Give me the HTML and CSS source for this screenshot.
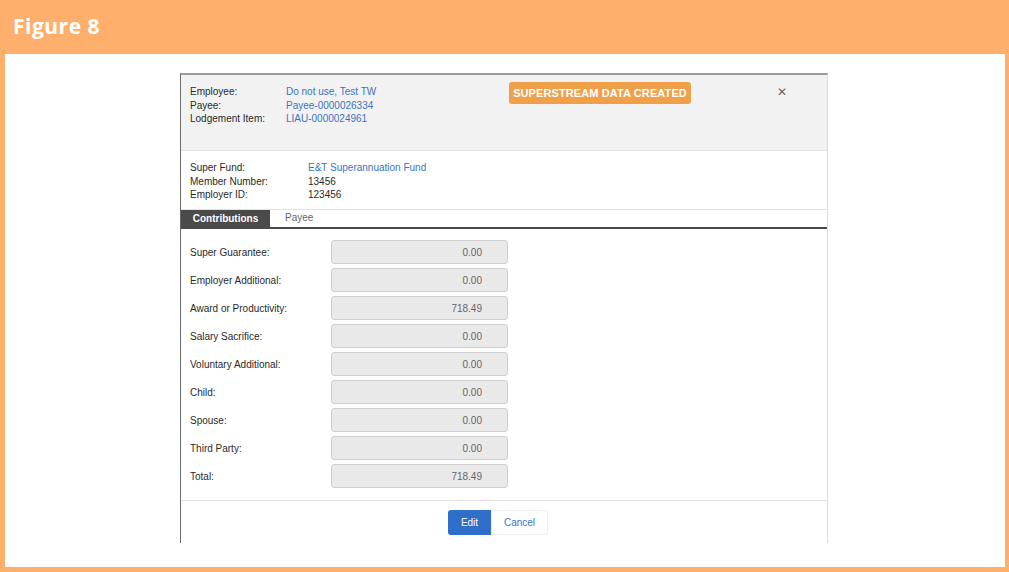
FILE: index.html
```html
<!DOCTYPE html>
<html lang="en">
<head>
<meta charset="UTF-8">
<title>Figure 8</title>
<link rel="stylesheet" href="styles.css">
</head>
<body>
<div class="frame">
<div class="title">Figure 8</div>
<div class="sheet">
<div class="dialog">
<div class="head">
<div class="info">
<div class="pair"><span class="lbl">Employee:</span><a class="val link">Do not use, Test TW</a></div>
<div class="pair"><span class="lbl">Payee:</span><a class="val link">Payee-0000026334</a></div>
<div class="pair"><span class="lbl">Lodgement Item:</span><a class="val link">LIAU-0000024961</a></div>
</div>
<div class="badge">SUPERSTREAM DATA CREATED</div>
<div class="close">&#x2715;</div>
</div>
<div class="fund">
<div class="pair"><span class="lbl">Super Fund:</span><a class="val link">E&amp;T Superannuation Fund</a></div>
<div class="pair"><span class="lbl">Member Number:</span><span class="val">13456</span></div>
<div class="pair"><span class="lbl">Employer ID:</span><span class="val">123456</span></div>
</div>
<div class="tabs">
<div class="tab active">Contributions</div>
<div class="tab">Payee</div>
</div>
<div class="form">
<div class="row"><label>Super Guarantee:</label><input type="text" value="0.00" readonly></div>
<div class="row"><label>Employer Additional:</label><input type="text" value="0.00" readonly></div>
<div class="row"><label>Award or Productivity:</label><input type="text" value="718.49" readonly></div>
<div class="row"><label>Salary Sacrifice:</label><input type="text" value="0.00" readonly></div>
<div class="row"><label>Voluntary Additional:</label><input type="text" value="0.00" readonly></div>
<div class="row"><label>Child:</label><input type="text" value="0.00" readonly></div>
<div class="row"><label>Spouse:</label><input type="text" value="0.00" readonly></div>
<div class="row"><label>Third Party:</label><input type="text" value="0.00" readonly></div>
<div class="row"><label>Total:</label><input type="text" value="718.49" readonly></div>
</div>
<div class="actions">
<button class="btn primary">Edit</button>
<button class="btn plain">Cancel</button>
</div>
</div>
</div>
</div>
</body>
</html>
```

FILE: styles.css
```css
body {
margin: 0;
font-family: "Liberation Sans", Arial, sans-serif;
}
.frame {
width: 1009px;
height: 572px;
box-sizing: border-box;
background-color: #fdaf6b;
padding: 0 4px 5px 5px;
display: flex;
flex-direction: column;
}
.title {
height: 54px;
box-sizing: border-box;
padding: 12px 0 0 8px;
color: white;
font-family: "Open Sans", sans-serif;
font-weight: 700;
font-size: 21px;
letter-spacing: 0.5px;
}
.sheet {
flex: 1;
background-color: white;
padding: 19px 0 0 175px;
}
.dialog {
width: 648px;
height: 470px;
box-sizing: border-box;
border-top: 2px solid #9a9a9a;
border-left: 1px solid #6a6a6a;
border-right: 1px solid #dcdcdc;
display: flex;
flex-direction: column;
font-size: 10px;
color: #2a2a2a;
}
.head {
background-color: #f2f2f2;
height: 76px;
box-sizing: border-box;
padding: 7px 0 0 9px;
display: flex;
align-items: flex-start;
border-bottom: 1px solid #e2e2e2;
}
.info {
width: 319px;
padding-top: 3px;
}
.pair {
display: flex;
line-height: 13.5px;
}
.head .lbl {
width: 96px;
}
.link {
color: #3b73c4;
}
.badge {
background-color: #f0a048;
color: white;
font-weight: 700;
font-size: 11px;
width: 182px;
text-align: center;
padding-top: 5px;
height: 22px;
box-sizing: border-box;
border-radius: 3px;
letter-spacing: 0.1px;
}
.close {
margin-left: 86px;
margin-top: 3px;
color: #666;
font-size: 12px;
}
.fund {
height: 59px;
box-sizing: border-box;
padding: 10px 0 0 9px;
border-bottom: 1px solid #e2e2e2;
}
.fund .lbl {
width: 118px;
}
.tabs {
display: flex;
height: 19px;
box-sizing: border-box;
border-bottom: 2px solid #4a4a4a;
}
.tab {
padding: 2px 15px 0;
color: #666;
font-size: 10px;
}
.tab.active {
background-color: #4a4a4a;
color: white;
font-weight: 700;
width: 89px;
box-sizing: border-box;
text-align: center;
padding: 3px 0 0;
}
.form {
padding: 11px 0 0 9px;
display: flex;
flex-direction: column;
gap: 4px;
height: 272px;
box-sizing: border-box;
border-bottom: 1px solid #e2e2e2;
}
.row {
display: flex;
align-items: center;
}
.row label {
width: 141px;
}
.row input {
width: 177px;
height: 24px;
box-sizing: border-box;
border: 1px solid #cfcfcf;
border-radius: 3px;
background-color: #e9e9e9;
text-align: right;
padding: 0 25px 0 0;
font-family: "Liberation Sans", Arial, sans-serif;
font-size: 10px;
color: #666;
}
.actions {
display: flex;
justify-content: center;
padding: 9px 0 0 0;
margin-right: 12px;
}
.btn {
height: 25px;
font-family: "Liberation Sans", Arial, sans-serif;
font-size: 10px;
border-radius: 3px;
}
.btn.primary {
width: 43px;
background-color: #2f6fc9;
color: white;
border: none;
border-radius: 3px 0 0 3px;
}
.btn.plain {
width: 57px;
background-color: white;
color: #3b73c4;
border: 1px solid #eee;
border-radius: 0 3px 3px 0;
}
```
